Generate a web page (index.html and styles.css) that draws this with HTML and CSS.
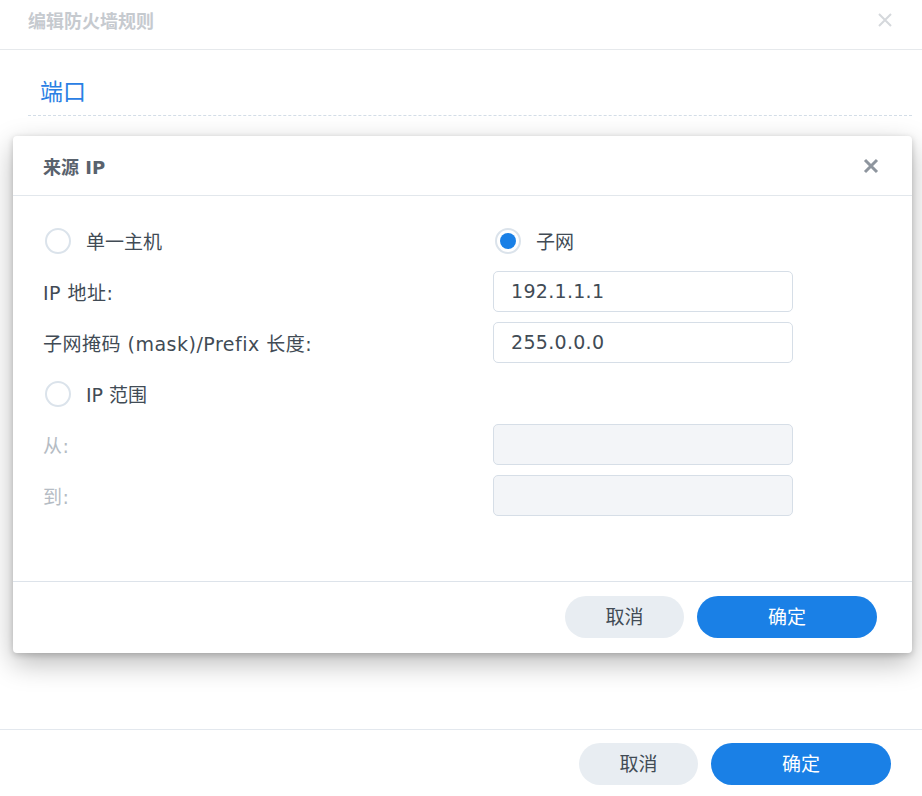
FILE: index.html
```html
<!DOCTYPE html>
<html lang="zh-CN">
<head>
	<meta charset="UTF-8">
	<title>编辑防火墙规则</title>
	<link rel="stylesheet" href="styles.css">
</head>
<body>
	<div class="page">
		<div class="pageHead">
			<span class="pageTitle">编辑防火墙规则</span>
			<svg class="pageClose" width="16" height="16" viewBox="0 0 16 16">
				<path d="M2 2L14 14M14 2L2 14" stroke="#d5d8dc" stroke-width="2" fill="none"/>
			</svg>
		</div>
		<div class="pageBody">
			<div class="sectionTitle">端口</div>
		</div>
		<div class="pageFoot">
			<a href="#" class="btn btnGrey">取消</a>
			<a href="#" class="btn btnBlue">确定</a>
		</div>
	</div>

	<div class="modal">
		<div class="modalHead">
			<span class="modalTitle">来源 IP</span>
			<svg class="modalClose" width="16" height="16" viewBox="0 0 16 16">
				<path d="M2 2L14 14M14 2L2 14" stroke="#8e959e" stroke-width="3" fill="none"/>
			</svg>
		</div>
		<div class="modalBody">
			<label class="radio"><span class="dot"></span>单一主机</label>
			<label class="radio"><span class="dot checked"></span>子网</label>

			<span class="label">IP 地址:</span>
			<div class="field">192.1.1.1</div>

			<span class="label">子网掩码 (mask)/Prefix 长度:</span>
			<div class="field">255.0.0.0</div>

			<label class="radio"><span class="dot"></span>IP 范围</label>
			<span></span>

			<span class="label disabled">从:</span>
			<div class="field fieldOff"></div>

			<span class="label disabled">到:</span>
			<div class="field fieldOff"></div>
		</div>
		<div class="modalFoot">
			<a href="#" class="btn btnGrey">取消</a>
			<a href="#" class="btn btnBlue">确定</a>
		</div>
	</div>
</body>
</html>
```

FILE: styles.css
```css
* {
	padding: 0;
	margin: 0;
	box-sizing: border-box;
	text-decoration: none;
}
body {
	font-family: "DejaVu Sans", "Noto Sans CJK SC", sans-serif;
	font-size: 19px;
	color: #414b55;
	background: #fff;
}
/* 背景里的大对话框 */
.page {
	display: flex;
	flex-direction: column;
	height: 100vh;
}
.pageHead {
	display: flex;
	align-items: center;
	justify-content: space-between;
	height: 50px;
	padding: 0 29px 10px 28px;
	border-bottom: 1px solid #e6e9ec;
}
.pageTitle {
	font-size: 18px;
	font-weight: bold;
	color: #c6cacf;
}
.pageBody {
	flex: 1;
	padding: 0 10px 0 28px;
}
.sectionTitle {
	padding: 30px 0 10px 12px;
	font-size: 23px;
	line-height: 25px;
	color: #2a80e4;
	border-bottom: 1px dashed #d3dde7;
}
.pageFoot {
	display: flex;
	justify-content: flex-end;
	gap: 13px;
	padding: 13px 31px 11px;
	border-top: 1px solid #e3e8ee;
}
/* 按钮 */
.btn {
	display: block;
	height: 42px;
	line-height: 42px;
	border-radius: 21px;
	text-align: center;
	font-size: 19px;
}
.btnGrey {
	width: 119px;
	background: #e8edf2;
	color: #414b55;
}
.btnBlue {
	width: 180px;
	background: #1a80e6;
	color: #fff;
}
/* 来源 IP 弹窗 */
.modal {
	position: absolute;
	left: 13px;
	top: 136px;
	width: 899px;
	background: #fff;
	border-radius: 4px;
	box-shadow: 0 10px 28px rgba(0, 0, 0, 0.28), 0 2px 6px rgba(0, 0, 0, 0.18);
}
.modalHead {
	display: flex;
	align-items: center;
	justify-content: space-between;
	height: 60px;
	padding: 0 33px 0 30px;
	border-bottom: 1px solid #e2e7ec;
}
.modalTitle {
	font-size: 18px;
	font-weight: bold;
	color: #59626d;
}
.modalBody {
	display: grid;
	grid-template-columns: 450px 300px;
	grid-auto-rows: 41px;
	row-gap: 10px;
	padding: 24px 30px 65px;
	align-items: center;
}
.radio {
	display: flex;
	align-items: center;
	gap: 15px;
	padding-left: 2px;
}
.dot {
	width: 26px;
	height: 26px;
	border-radius: 50%;
	border: 2px solid #dbe3eb;
	position: relative;
}
.dot.checked:after {
	content: '';
	position: absolute;
	left: 3px;
	top: 3px;
	width: 16px;
	height: 16px;
	border-radius: 50%;
	background: #1a80e6;
}
.label {
	letter-spacing: 0.5px;
}
.label.disabled {
	color: #b5bcc4;
}
.field {
	height: 41px;
	line-height: 39px;
	padding: 0 17px;
	border: 1px solid #d6dee7;
	border-radius: 5px;
	color: #414b55;
	letter-spacing: 0.3px;
}
.fieldOff {
	background: #f3f5f8;
}
.modalFoot {
	display: flex;
	justify-content: flex-end;
	gap: 13px;
	padding: 14px 35px 15px;
	border-top: 1px solid #dde3ea;
}
```
